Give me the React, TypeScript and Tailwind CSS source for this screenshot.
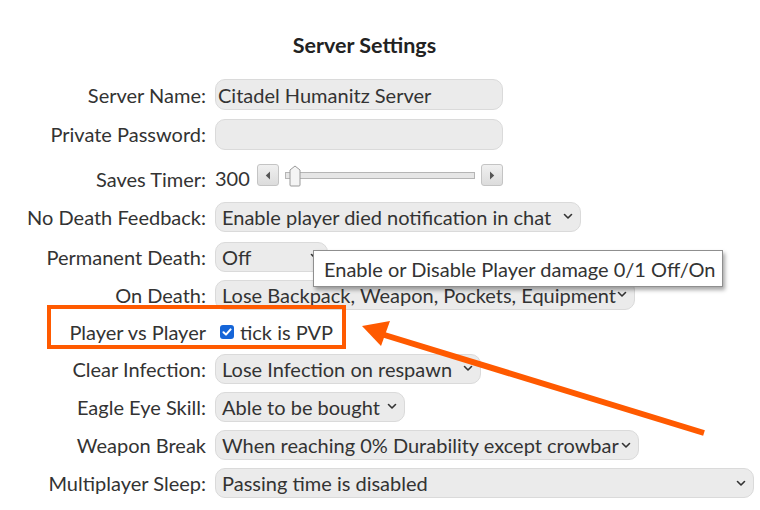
import React from "react";

function Chevron() {
  return (
    <svg width="10" height="7" viewBox="0 0 10 7" className="shrink-0">
      <path d="M1.5 1.5 L5 5 L8.5 1.5" fill="none" stroke="#333" strokeWidth="1.6" strokeLinecap="round" strokeLinejoin="round" />
    </svg>
  );
}

function Label({ children }: { children: React.ReactNode }) {
  return <div className="w-[206px] shrink-0 text-right text-[#333]">{children}</div>;
}

function Select({ text, w }: { text: string; w: string }) {
  return (
    <div className={`flex h-[30px] items-center justify-between rounded-[10px] border border-[#dadada] bg-[#ebebeb] pl-[6px] pr-[7px] ${w}`}>
      <span className="whitespace-nowrap text-[#333]">{text}</span>
      <Chevron />
    </div>
  );
}

function SliderButton({ dir }: { dir: "l" | "r" }) {
  return (
    <div className="flex h-[22px] w-[22px] items-center justify-center rounded-[3px] border border-[#c4c4c4] bg-gradient-to-b from-[#f0f0f0] to-[#dcdcdc]">
      <svg width="6" height="9" viewBox="0 0 6 9">
        {dir === "l" ? <path d="M5 0.5 L0.8 4.5 L5 8.5 Z" fill="#555" /> : <path d="M1 0.5 L5.2 4.5 L1 8.5 Z" fill="#555" />}
      </svg>
    </div>
  );
}

export default function App() {
  return (
    <div className="relative h-[510px] w-[760px] overflow-hidden bg-white font-['Lato','Liberation_Sans',sans-serif] text-[20px] leading-none text-[#333]">
      <div className="flex h-[75px] w-[729px] items-start justify-center pt-[35px] text-[21.5px] font-bold text-[#222]">
        Server Settings
      </div>

      <div className="flex flex-col">
        <div className="flex h-[39px] items-center gap-[9px]">
          <Label>Server Name:</Label>
          <div className="flex h-[31px] w-[288px] items-center rounded-[10px] border border-[#dadada] bg-[#ebebeb] px-[2px] text-[#333]">
            Citadel Humanitz Server
          </div>
        </div>
        <div className="flex h-[40px] items-center gap-[9px]">
          <Label>Private Password:</Label>
          <div className="h-[31px] w-[288px] rounded-[10px] border border-[#dadada] bg-[#ebebeb]" />
        </div>
        <div className="flex h-[42px] items-center gap-[9px]">
          <Label>
            <span className="relative top-[4px]">Saves Timer:</span>
          </Label>
          <div className="flex items-center">
            <span className="relative top-[3px] w-[42px]">300</span>
            <SliderButton dir="l" />
            <div className="relative mx-[6px] h-[7px] w-[190px] border border-[#b5b5b5] bg-[#e6e6e6]">
              <svg className="absolute left-[3px] top-[-8px]" width="12" height="22" viewBox="0 0 12 22">
                <path d="M1 5 L6 1 L11 5 L11 20 Q11 21 10 21 L2 21 Q1 21 1 20 Z" fill="#f4f4f4" stroke="#9a9a9a" strokeWidth="1" />
              </svg>
            </div>
            <SliderButton dir="r" />
          </div>
        </div>
        <div className="flex h-[41px] items-center gap-[9px]">
          <Label>No Death Feedback:</Label>
          <Select text="Enable player died notification in chat" w="w-[366px]" />
        </div>
        <div className="flex h-[39px] items-center gap-[9px]">
          <Label>Permanent Death:</Label>
          <Select text="Off" w="w-[113px]" />
        </div>
        <div className="flex h-[37px] items-center gap-[9px]">
          <Label>On Death:</Label>
          <Select text="Lose Backpack, Weapon, Pockets, Equipment" w="w-[420px]" />
        </div>
        <div className="flex h-[37px] items-center gap-[9px]">
          <Label>Player vs Player</Label>
          <div className="flex items-center">
            <div className="ml-[5px] mr-[6px] flex h-[14px] w-[14px] items-center justify-center rounded-[3px] bg-[#1565d8]">
              <svg width="10" height="10" viewBox="0 0 10 10">
                <path d="M1.5 5.2 L4 7.6 L8.6 2.4" fill="none" stroke="#fff" strokeWidth="2" strokeLinecap="round" strokeLinejoin="round" />
              </svg>
            </div>
            <span>tick is PVP</span>
          </div>
        </div>
        <div className="flex h-[37px] items-center gap-[9px]">
          <Label>Clear Infection:</Label>
          <Select text="Lose Infection on respawn" w="w-[266px]" />
        </div>
        <div className="flex h-[39px] items-center gap-[9px]">
          <Label>Eagle Eye Skill:</Label>
          <Select text="Able to be bought" w="w-[190px]" />
        </div>
        <div className="flex h-[38px] items-center gap-[9px]">
          <Label>Weapon Break</Label>
          <Select text="When reaching 0% Durability except crowbar" w="w-[424px]" />
        </div>
        <div className="flex h-[38px] items-center gap-[9px]">
          <Label>Multiplayer Sleep:</Label>
          <Select text="Passing time is disabled" w="w-[539px]" />
        </div>
      </div>

      {/* tooltip */}
      <div className="absolute left-[313px] top-[250px] flex h-[37px] w-[410px] items-center border border-[#8f8f8f] bg-white pl-[10px] text-[#333] shadow-[2px_3px_4px_rgba(0,0,0,0.35)]">
        Enable or Disable Player damage 0/1 Off/On
      </div>

      {/* annotation box */}
      <div className="absolute left-[47px] top-[305px] h-[44px] w-[299px] border-[4px] border-[#ff5a00]" />

      {/* arrow */}
      <svg className="absolute left-0 top-0" width="760" height="510" viewBox="0 0 760 510">
        <line x1="704" y1="433" x2="378" y2="333" stroke="#ff5a00" strokeWidth="6" />
        <polygon points="362,326 390,321 381,346" fill="#ff5a00" />
      </svg>
    </div>
  );
}
